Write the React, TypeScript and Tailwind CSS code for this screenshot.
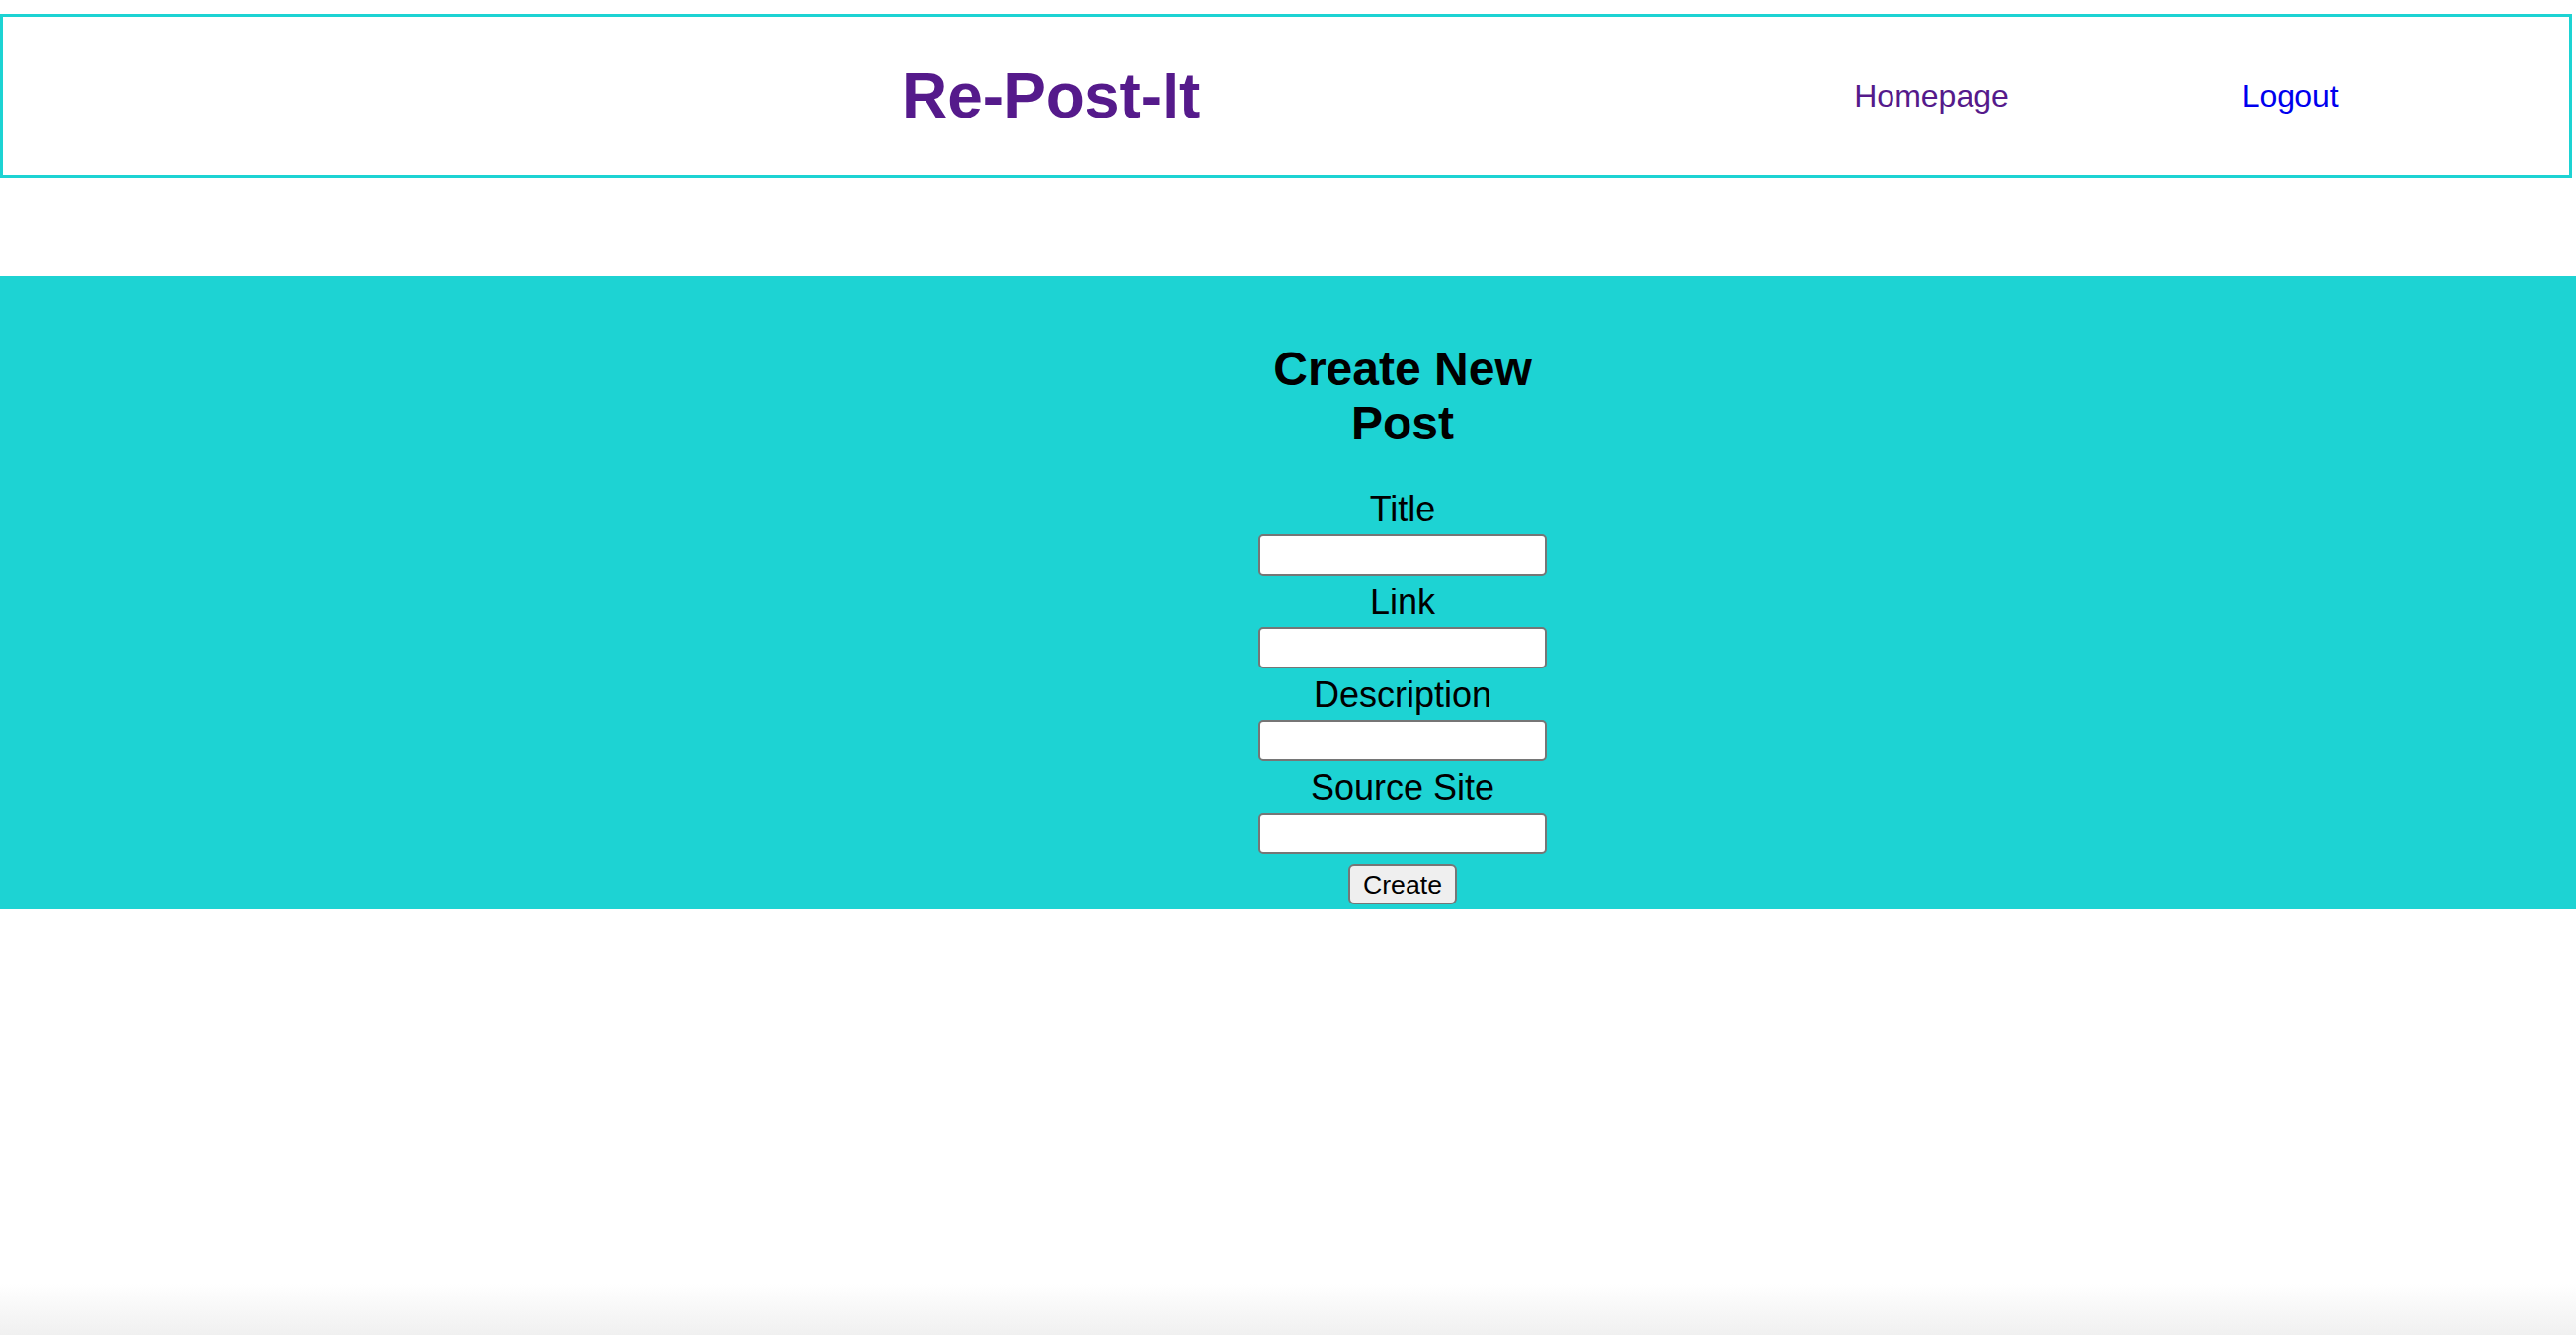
const fields = ["Title", "Link", "Description", "Source Site"];

export default function App() {
  return (
    <div className="flex h-[1352px] flex-col overflow-hidden bg-white font-['Liberation_Sans',Arial,sans-serif] text-black">
      <header className="mr-[4px] mt-[14px] flex h-[166px] items-center border-[3px] border-[#1dd3d3]">
        <h1 className="ml-[910px] text-[64px] font-bold leading-[74px] text-[#551a8b]">
          Re-Post-It
        </h1>
        <a href="#" className="ml-[662px] text-[32px] leading-[37px] text-[#551a8b]">
          Homepage
        </a>
        <a href="#" className="ml-[236px] text-[32px] leading-[37px] text-[#0000ee]">
          Logout
        </a>
      </header>

      <section className="mt-[100px] bg-[#1dd3d3] pb-[5px] pt-[26px]">
        <form className="ml-[1274px] flex w-[292px] flex-col items-center">
          <h2 className="mb-[39px] mt-[40px] text-center text-[48px] font-bold leading-[55px]">
            Create New Post
          </h2>
          {fields.map((field) => (
            <label key={field} className="flex flex-col items-center">
              <span className="text-[36px] leading-[41px]">{field}</span>
              <input
                type="text"
                className="mb-[6px] mt-[5px] h-[42px] w-[292px] rounded-[5px] border-2 border-[#767676] bg-white"
              />
            </label>
          ))}
          <button
            type="button"
            className="mt-[4px] h-[41px] w-[110px] rounded-[6px] border-2 border-[#767676] bg-[#efefef] text-[26.67px] leading-[30px]"
          >
            Create
          </button>
        </form>
      </section>

      <div className="mt-auto h-[52px] bg-linear-to-b from-white to-[#f0f0f0]" />
    </div>
  );
}
